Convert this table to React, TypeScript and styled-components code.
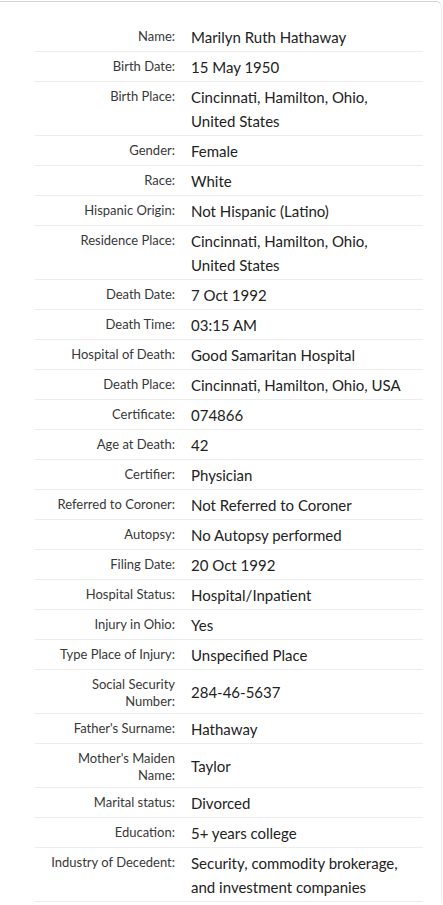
import React from "react";
import styled, { createGlobalStyle } from "styled-components";

const Global = createGlobalStyle`
  html, body { margin: 0; padding: 0; background: #fff; }
  body { font-family: Lato, "Liberation Sans", sans-serif; overflow: hidden; }
`;

const Card = styled.div`
  margin: 1px 1px 0 -12px;
  border-top: 1px solid #d4d4d4;
  border-right: 1px solid #ececec;
  border-top-right-radius: 6px;
  padding: 20px 18px 0 47px;
  background: #fff;
`;

const List = styled.dl`
  margin: 0;
  display: flex;
  flex-direction: column;
`;

const Row = styled.div`
  display: grid;
  grid-template-columns: 130px 1fr;
  column-gap: 16px;
  padding: 0 12px 0 10px;
  border-bottom: 1px solid #ececec;
`;

const Label = styled.dt`
  margin: 0;
  padding: 6px 0 3px;
  align-self: start;
  text-align: right;
  font-size: 13px;
  line-height: 17px;
  color: #383838;
`;

const Value = styled.dd`
  margin: 0;
  padding: 3px 0 2px;
  align-self: center;
  font-size: 15px;
  line-height: 24px;
  color: #222;
`;

const rows: [string, string][] = [
  ["Name:", "Marilyn Ruth Hathaway"],
  ["Birth Date:", "15 May 1950"],
  ["Birth Place:", "Cincinnati, Hamilton, Ohio, United States"],
  ["Gender:", "Female"],
  ["Race:", "White"],
  ["Hispanic Origin:", "Not Hispanic (Latino)"],
  ["Residence Place:", "Cincinnati, Hamilton, Ohio, United States"],
  ["Death Date:", "7 Oct 1992"],
  ["Death Time:", "03:15 AM"],
  ["Hospital of Death:", "Good Samaritan Hospital"],
  ["Death Place:", "Cincinnati, Hamilton, Ohio, USA"],
  ["Certificate:", "074866"],
  ["Age at Death:", "42"],
  ["Certifier:", "Physician"],
  ["Referred to Coroner:", "Not Referred to Coroner"],
  ["Autopsy:", "No Autopsy performed"],
  ["Filing Date:", "20 Oct 1992"],
  ["Hospital Status:", "Hospital/Inpatient"],
  ["Injury in Ohio:", "Yes"],
  ["Type Place of Injury:", "Unspecified Place"],
  ["Social Security Number:", "284-46-5637"],
  ["Father's Surname:", "Hathaway"],
  ["Mother's Maiden Name:", "Taylor"],
  ["Marital status:", "Divorced"],
  ["Education:", "5+ years college"],
  ["Industry of Decedent:", "Security, commodity brokerage, and investment companies"],
];

export default function App() {
  return (
    <>
      <Global />
      <Card>
        <List>
          {rows.map(([l, v]) => (
            <Row key={l}>
              <Label>{l}</Label>
              <Value>{v}</Value>
            </Row>
          ))}
        </List>
      </Card>
    </>
  );
}
